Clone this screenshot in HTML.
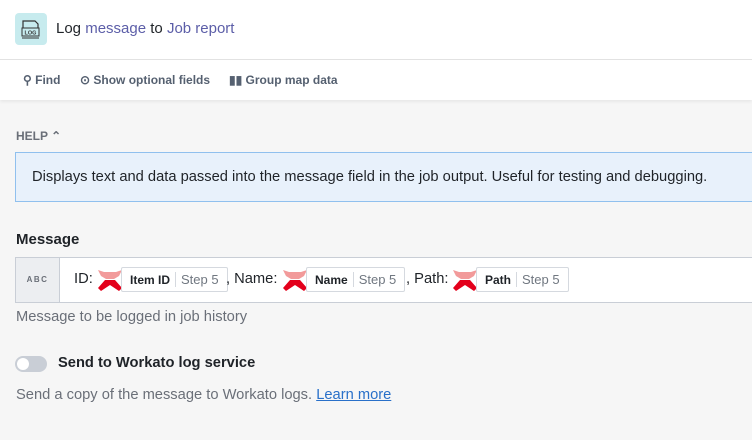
<!DOCTYPE html>
<html><head><style>
*{box-sizing:border-box;margin:0;padding:0}
body{width:752px;height:440px;overflow:hidden;background:#f6f6f6;font-family:"Liberation Sans",sans-serif;color:#1f2328;position:relative}
.hdr{position:absolute;left:0;top:0;width:752px;height:60px;background:#fff;border-bottom:1px solid #e2e2e2}
.ico{position:absolute;left:15px;top:13px;width:32px;height:32px;background:#c7ebee;border-radius:4px}
.title{position:absolute;left:56px;top:20px;font-size:15px;color:#1f2328}
.title span{color:#5c5ea8}
.tb{position:absolute;left:0;top:60px;width:752px;height:40px;background:#fff;box-shadow:0 2px 3px rgba(0,0,0,.06);font-size:12px;font-weight:bold;color:#556070}
.tb div{position:absolute;top:13px}
.help{position:absolute;left:16px;top:129px;font-size:12px;color:#6a6f78;font-weight:bold}
.hbox{position:absolute;left:15px;top:152px;width:760px;height:50px;background:#e8f1fb;border:1px solid #90c0ee;font-size:14.7px;padding:16px 0 0 16px;color:#1f2328}
.lbl{position:absolute;left:16px;top:231px;font-size:15px;font-weight:bold}
.inp{position:absolute;left:15px;top:257px;width:760px;height:46px;background:#fff;border:1px solid #c9ced6}
.abc{position:absolute;left:0;top:0;width:44px;height:44px;background:#eceef1;border-right:1px solid #c9ced6;font-size:8px;font-weight:bold;color:#6a6f78;letter-spacing:1.5px;text-align:center;line-height:44px}
.t{position:absolute;top:13px;font-size:14.7px}
.pill{position:absolute;top:9px;height:25px;border:1px solid #d5d9df;border-radius:2px;font-size:12px;line-height:23px;padding:0 8px;background:#fff;white-space:nowrap}
.pill b{color:#1f2328}.pill i{font-style:normal;color:#707780;border-left:1px solid #d5d9df;padding-left:5px;margin-left:5px;font-size:13px}
.lg{position:absolute;top:9px;width:26px;height:26px}
.sub{position:absolute;left:16px;top:309px;font-size:14.7px;color:#6a6f78}
.tog{position:absolute;left:15px;top:356px;width:32px;height:16px;border-radius:8px;background:#c9ced6}
.tog:after{content:"";position:absolute;left:2px;top:2px;width:12px;height:12px;border-radius:6px;background:#fff}
.stl{position:absolute;left:58px;top:355px;font-size:14.7px;font-weight:bold}
.sd{position:absolute;left:16px;top:387px;font-size:14.7px;color:#6a6f78}
.sd a{color:#2970c9;text-decoration:underline}
</style></head><body>
<div class="hdr">
<div class="ico"><svg width="32" height="32" viewBox="0 0 32 32"><path d="M8 22V8h12l3 3v11" fill="none" stroke="#333" stroke-width="1.2"/><rect x="7" y="15" width="17" height="8" fill="#c7ebee" stroke="#333" stroke-width="1"/><text x="15.5" y="21.5" font-size="5.5" font-weight="bold" text-anchor="middle" fill="#333" font-family="Liberation Sans">LOG</text><path d="M7 25h17" stroke="#333" stroke-width="1"/></svg></div>
<div class="title">Log <span>message</span> to <span>Job report</span></div>
</div>
<div class="tb">
<div style="left:23px">⚲ Find</div>
<div style="left:80px">⊙ Show optional fields</div>
<div style="left:229px">▮▮ Group map data</div>
</div>
<div class="help">HELP &#8963;</div>
<div class="hbox">Displays text and data passed into the message field in the job output. Useful for testing and debugging.</div>
<div class="lbl">Message</div>
<div class="inp">
<div class="abc">ABC</div>
<div class="t" style="left:58px">ID:</div>
<svg class="lg" style="left:81px" viewBox="0 0 26 26"><path d="M1 3l6 2h12l6-2-3 6-5 3h-8l-5-3z" fill="#f29a9a"/><path d="M1 21l7-8h10l7 8-3 3-9-6-9 6z" fill="#e3001b"/></svg>
<div class="pill" style="left:105px"><b>Item ID</b><i>Step 5</i></div>
<div class="t" style="left:210px">, Name:</div>
<svg class="lg" style="left:266px" viewBox="0 0 26 26"><path d="M1 3l6 2h12l6-2-3 6-5 3h-8l-5-3z" fill="#f29a9a"/><path d="M1 21l7-8h10l7 8-3 3-9-6-9 6z" fill="#e3001b"/></svg>
<div class="pill" style="left:290px"><b>Name</b><i>Step 5</i></div>
<div class="t" style="left:390px">, Path:</div>
<svg class="lg" style="left:436px" viewBox="0 0 26 26"><path d="M1 3l6 2h12l6-2-3 6-5 3h-8l-5-3z" fill="#f29a9a"/><path d="M1 21l7-8h10l7 8-3 3-9-6-9 6z" fill="#e3001b"/></svg>
<div class="pill" style="left:460px"><b>Path</b><i>Step 5</i></div>
</div>
<div class="sub">Message to be logged in job history</div>
<div class="tog"></div>
<div class="stl">Send to Workato log service</div>
<div class="sd">Send a copy of the message to Workato logs. <a>Learn more</a></div>
</body></html>
